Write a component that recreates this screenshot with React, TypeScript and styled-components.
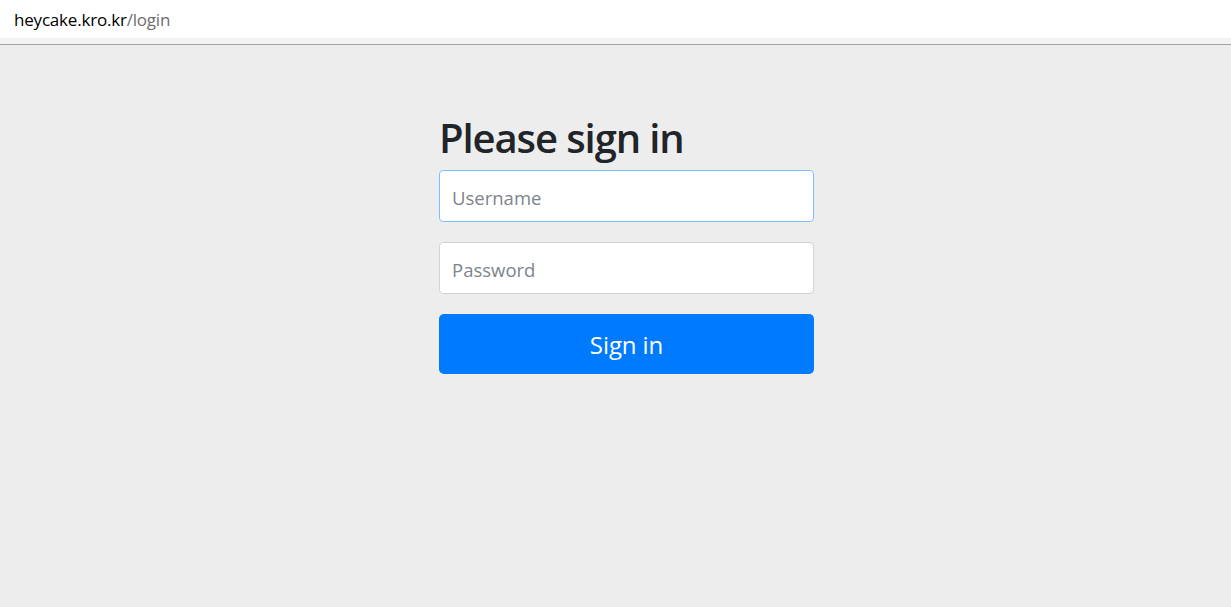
import React from 'react';
import styled, { createGlobalStyle } from 'styled-components';

const GlobalStyle = createGlobalStyle`
  html, body {
    margin: 0;
    padding: 0;
    background-color: #ededed;
    font-family: "Open Sans", "Noto Sans", sans-serif;
  }
`;

const AddressBar = styled.div`
  height: 38px;
  background-color: #ffffff;
  display: flex;
  align-items: center;
  padding-left: 14px;
  font-size: 17px;
  letter-spacing: -0.2px;
  color: #000000;
`;

const Path = styled.span`
  color: #6d6d6d;
`;

const BarShade = styled.div`
  height: 6px;
  background-color: #f2f2f2;
  border-bottom: 1px solid #a3a3a3;
`;

const Page = styled.div`
  display: flex;
  justify-content: center;
  padding-left: 22px;
  padding-top: 67px;
  min-height: 562px;
  box-sizing: border-box;
`;

const Form = styled.form`
  width: 375px;
  display: flex;
  flex-direction: column;
`;

const Heading = styled.h2`
  margin: 0 0 6px 0;
  font-size: 40px;
  font-weight: 600;
  line-height: 52px;
  color: #212529;
  letter-spacing: -1.1px;
`;

const Input = styled.input<{ $focused?: boolean }>`
  height: 52px;
  box-sizing: border-box;
  margin-bottom: 20px;
  padding: 3px 12px 0;
  border: 1px solid ${p => (p.$focused ? '#80bdff' : '#ced4da')};
  border-radius: 4px;
  background-color: #ffffff;
  font-family: "Open Sans", "Noto Sans", sans-serif;
  font-size: 18.5px;
  color: #495057;
  outline: none;
  &::placeholder {
    color: #7d848b;
  }
`;

const Button = styled.button`
  height: 60px;
  border: none;
  border-radius: 5px;
  background-color: #007bff;
  color: #ffffff;
  font-family: "Open Sans", "Noto Sans", sans-serif;
  font-size: 24px;
  cursor: pointer;
  letter-spacing: -0.1px;
`;

export default function App() {
  return (
    <>
      <GlobalStyle />
      <AddressBar>
        heycake.kro.kr<Path>/login</Path>
      </AddressBar>
      <BarShade />
      <Page>
        <Form onSubmit={e => e.preventDefault()}>
          <Heading>Please sign in</Heading>
          <Input $focused placeholder="Username" />
          <Input type="password" placeholder="Password" />
          <Button type="submit">Sign in</Button>
        </Form>
      </Page>
    </>
  );
}
